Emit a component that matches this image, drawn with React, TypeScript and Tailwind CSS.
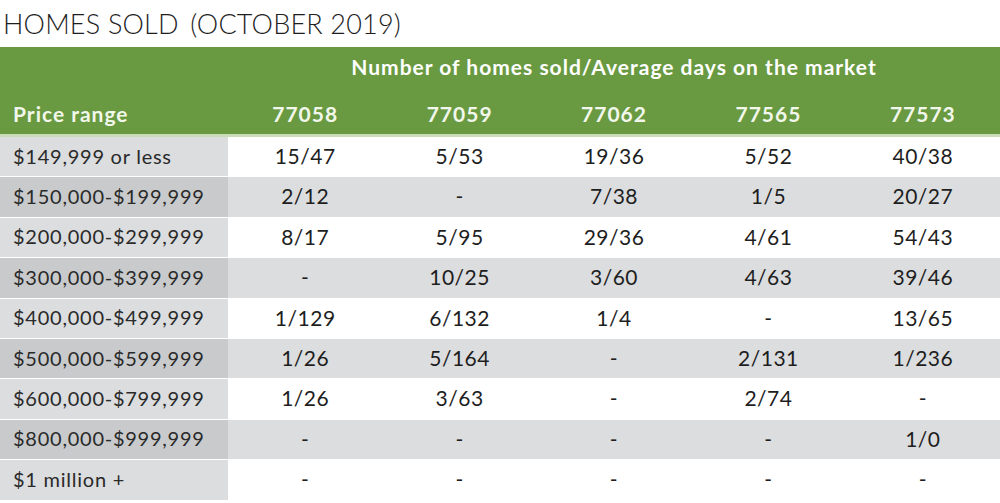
const zips = ["77058", "77059", "77062", "77565", "77573"];

const rows: { range: string; values: string[] }[] = [
  { range: "$149,999 or less", values: ["15/47", "5/53", "19/36", "5/52", "40/38"] },
  { range: "$150,000-$199,999", values: ["2/12", "-", "7/38", "1/5", "20/27"] },
  { range: "$200,000-$299,999", values: ["8/17", "5/95", "29/36", "4/61", "54/43"] },
  { range: "$300,000-$399,999", values: ["-", "10/25", "3/60", "4/63", "39/46"] },
  { range: "$400,000-$499,999", values: ["1/129", "6/132", "1/4", "-", "13/65"] },
  { range: "$500,000-$599,999", values: ["1/26", "5/164", "-", "2/131", "1/236"] },
  { range: "$600,000-$799,999", values: ["1/26", "3/63", "-", "2/74", "-"] },
  { range: "$800,000-$999,999", values: ["-", "-", "-", "-", "1/0"] },
  { range: "$1 million +", values: ["-", "-", "-", "-", "-"] },
];

export default function App() {
  return (
    <div className="w-[1000px] h-[503px] bg-white overflow-hidden font-['Lato',sans-serif]">
      <h1 className="h-[47px] pl-[3px] pt-[7px] text-[27px] leading-[34px] font-light text-[#1e1e1e] tracking-[0.2px]">
        HOMES SOLD <span className="ml-[4px]">(OCTOBER 2019)</span>
      </h1>

      <div className="bg-[#699a41] h-[87px] flex flex-col text-white font-bold">
        <div className="flex h-[43px] items-center">
          <div className="w-[228px]" />
          <div className="flex-1 text-center text-[21px] tracking-[1px] pb-[4px]">
            Number of homes sold/Average days on the market
          </div>
        </div>
        <div className="flex h-[44px] items-center text-[21px] tracking-[1px] text-[#f2f7ec] pt-[4px]">
          <div className="w-[228px] pl-[13px]">Price range</div>
          {zips.map((z) => (
            <div key={z} className="flex-1 text-center">{z}</div>
          ))}
        </div>
      </div>
      <div className="h-[3px] bg-[#c8dcb8]" />

      <div className="flex flex-col">
        {rows.map((r, i) => (
          <div
            key={r.range}
            className={`flex h-[40.4px] items-center border-b border-white ${i % 2 === 1 ? "bg-[#dcdddf]" : "bg-white"}`}
          >
            <div
              className={`w-[228px] h-full flex items-center pl-[13px] pb-[2px] text-[20px] text-[#2a2a2a] tracking-[0.75px] ${i % 2 === 1 ? "bg-[#c9cacc]" : "bg-[#dcdddf]"}`}
            >
              {r.range}
            </div>
            {r.values.map((v, j) => (
              <div key={j} className="flex-1 text-center pb-[2px] text-[21px] text-[#1e1e1e] tracking-[0.5px]">
                {v}
              </div>
            ))}
          </div>
        ))}
      </div>
    </div>
  );
}
